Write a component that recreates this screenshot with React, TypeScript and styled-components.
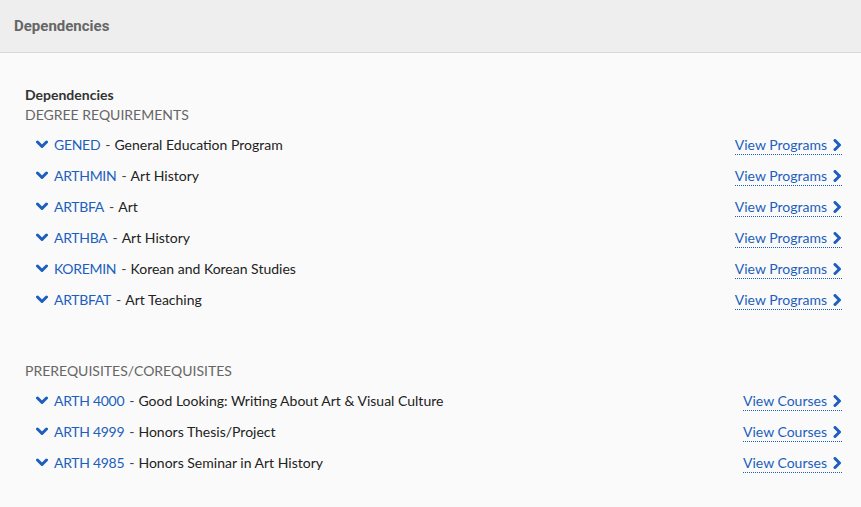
import React from "react";
import styled, { createGlobalStyle } from "styled-components";

const Global = createGlobalStyle`
  html, body { margin: 0; padding: 0; background: #fafafa; }
  body { font-family: Lato, "Open Sans", sans-serif; font-size: 14px; color: #222; }
`;

const Panel = styled.div`
  width: 861px;
  min-height: 507px;
  background: #fafafa;
`;

const Header = styled.div`
  height: 52px;
  display: flex;
  align-items: center;
  padding-left: 14px;
  background: #eeeeee;
  border-bottom: 1px solid #d9d9d9;
  font-family: Roboto, sans-serif;
  font-weight: 700;
  font-size: 15px;
  color: #666666;
`;

const Body = styled.div`
  padding: 32px 19px 20px 25px;
`;

const Title = styled.div`
  font-weight: 700;
  line-height: 20px;
  color: #333;
`;

const Section = styled.div<{ $gap?: number }>`
  margin-top: ${(p) => p.$gap ?? 0}px;
`;

const SectionTitle = styled.div`
  line-height: 20px;
  color: #666;
  text-transform: uppercase;
  margin-bottom: 4px;
`;

const Row = styled.div`
  height: 31px;
  display: flex;
  align-items: center;
  padding-left: 11px;
`;

const Code = styled.span`
  color: #1c5fbd;
  margin-left: 6px;
  letter-spacing: -0.3px;
`;

const Dash = styled.span`
  margin: 0 4px 0 5px;
  color: #444;
`;

const Desc = styled.span`
  color: #222;
`;

const Link = styled.a`
  margin-left: auto;
  display: flex;
  align-items: center;
  gap: 6px;
  color: #1c5fbd;
  text-decoration: none;
  border-bottom: 1px dotted #1c5fbd;
  line-height: 18px;
  margin-top: 1px;
`;

const Down = () => (
  <svg width="12" height="9" viewBox="0 0 12 9">
    <polyline points="1.5,2 6,6.5 10.5,2" fill="none" stroke="#1c5fbd" strokeWidth="3" strokeLinecap="round" strokeLinejoin="round" />
  </svg>
);

const Right = () => (
  <svg width="9" height="12" viewBox="0 0 9 12">
    <polyline points="2,1.5 6.5,6 2,10.5" fill="none" stroke="#1c5fbd" strokeWidth="3" strokeLinecap="round" strokeLinejoin="round" />
  </svg>
);

const degree = [
  ["GENED", "General Education Program"],
  ["ARTHMIN", "Art History"],
  ["ARTBFA", "Art"],
  ["ARTHBA", "Art History"],
  ["KOREMIN", "Korean and Korean Studies"],
  ["ARTBFAT", "Art Teaching"],
];

const prereq = [
  ["ARTH 4000", "Good Looking: Writing About Art & Visual Culture"],
  ["ARTH 4999", "Honors Thesis/Project"],
  ["ARTH 4985", "Honors Seminar in Art History"],
];

const Item = ({ code, desc, link }: { code: string; desc: string; link: string }) => (
  <Row>
    <Down />
    <Code>{code}</Code>
    <Dash>-</Dash>
    <Desc>{desc}</Desc>
    <Link href="#">
      {link}
      <Right />
    </Link>
  </Row>
);

export default function App() {
  return (
    <Panel>
      <Global />
      <Header>Dependencies</Header>
      <Body>
        <Title>Dependencies</Title>
        <Section>
          <SectionTitle>Degree Requirements</SectionTitle>
          {degree.map(([c, d]) => (
            <Item key={c} code={c} desc={d} link="View Programs" />
          ))}
        </Section>
        <Section $gap={46}>
          <SectionTitle>Prerequisites/Corequisites</SectionTitle>
          {prereq.map(([c, d]) => (
            <Item key={c} code={c} desc={d} link="View Courses" />
          ))}
        </Section>
      </Body>
    </Panel>
  );
}
